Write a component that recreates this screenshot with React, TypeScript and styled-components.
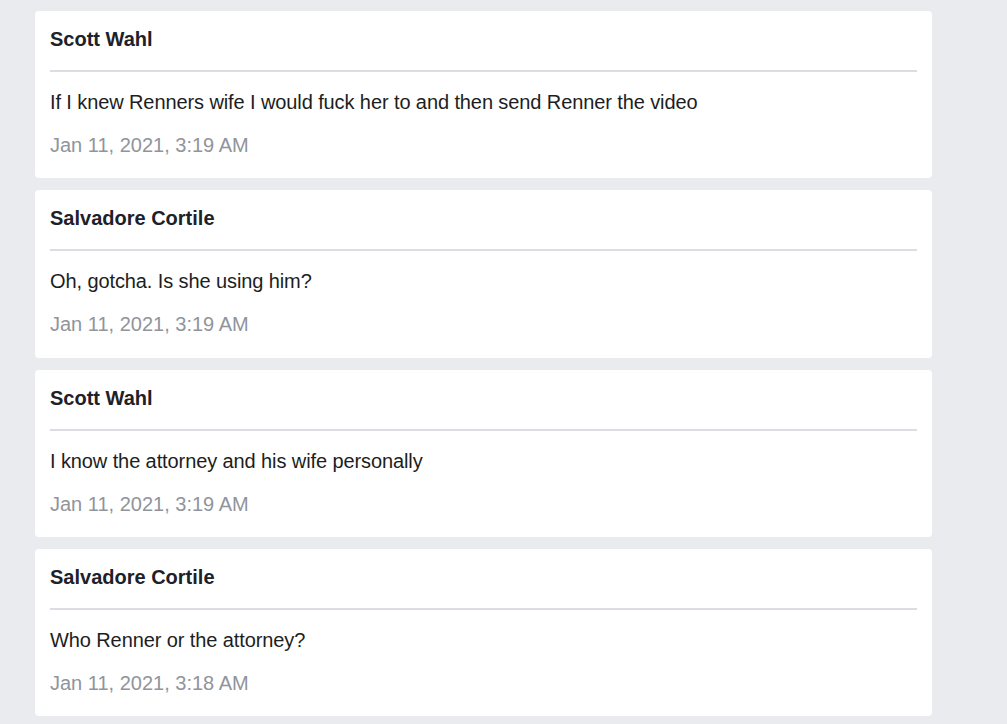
import React from "react";
import styled, { createGlobalStyle } from "styled-components";

// --- Dados ---
interface Message {
  author: string;
  text: string;
  time: string;
}

const messages: Message[] = [
  {
    author: "Scott Wahl",
    text: "If I knew Renners wife I would fuck her to and then send Renner the video",
    time: "Jan 11, 2021, 3:19 AM",
  },
  {
    author: "Salvadore Cortile",
    text: "Oh, gotcha. Is she using him?",
    time: "Jan 11, 2021, 3:19 AM",
  },
  {
    author: "Scott Wahl",
    text: "I know the attorney and his wife personally",
    time: "Jan 11, 2021, 3:19 AM",
  },
  {
    author: "Salvadore Cortile",
    text: "Who Renner or the attorney?",
    time: "Jan 11, 2021, 3:18 AM",
  },
];

// --- Estilos ---
const GlobalStyle = createGlobalStyle`
  html, body {
    margin: 0;
    padding: 0;
    background: #e9ebee;
    font-family: "Liberation Sans", Arial, sans-serif;
  }
`;

const Feed = styled.div`
  display: flex;
  flex-direction: column;
  gap: 12px;
  padding: 11px 0 12px 35px;
  min-height: 100vh;
  box-sizing: border-box;
`;

const Card = styled.div`
  width: 897px;
  box-sizing: border-box;
  background: #fff;
  border-radius: 4px;
  padding: 16px 15px 21.34px;
`;

const Author = styled.div`
  font-size: 20px;
  line-height: 24px;
  font-weight: 700;
  color: #1d2129;
  padding-bottom: 19px;
  border-bottom: 2px solid #dadde1;
`;

const Body = styled.div`
  font-size: 20px;
  line-height: 24px;
  color: #1c1e21;
  margin-top: 18px;
  letter-spacing: -0.1px;
`;

const Timestamp = styled.div`
  font-size: 20px;
  line-height: 24px;
  color: #90949c;
  margin-top: 19px;
`;

export default function App() {
  return (
    <>
      <GlobalStyle />
      <Feed>
        {messages.map((m, i) => (
          <Card key={i}>
            <Author>{m.author}</Author>
            <Body>{m.text}</Body>
            <Timestamp>{m.time}</Timestamp>
          </Card>
        ))}
      </Feed>
    </>
  );
}
